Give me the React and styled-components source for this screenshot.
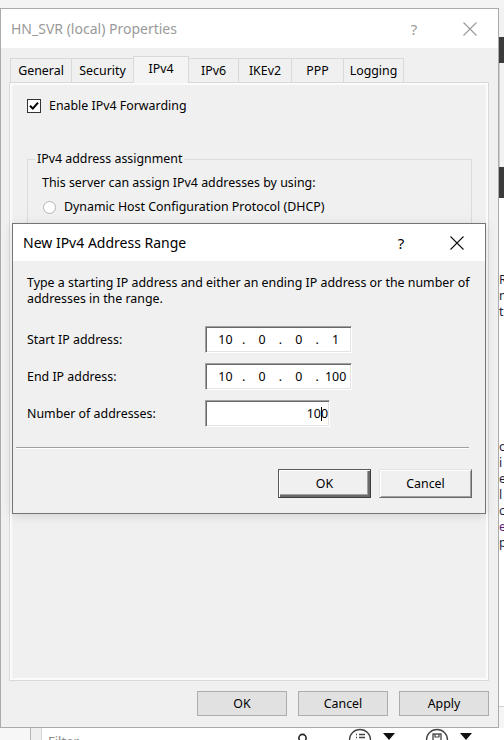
import React from 'react';
import styled, { createGlobalStyle } from 'styled-components';

const UI = `"Noto Sans", "Liberation Sans", Arial, sans-serif`;

const Global = createGlobalStyle`
  html, body { margin: 0; padding: 0; }
  body { width: 504px; height: 740px; overflow: hidden; background: #f5f5f5; font-family: ${UI}; }
  * { box-sizing: border-box; }
`;

const Desktop = styled.div`
  position: relative;
  width: 504px;
  height: 740px;
  overflow: hidden;
  font-family: ${UI};
  font-size: 12.4px;
  color: #000;
`;

/* ---------- background application (behind) ---------- */
const BackApp = styled.div`
  position: absolute;
  inset: 0;
  display: flex;
  flex-direction: column;
  background: #fff;
`;
const BackTop = styled.div`
  height: 8px;
  flex: none;
  background: #f4f4f4;
`;
const BackMiddle = styled.div`
  flex: 1;
  display: flex;
  min-height: 0;
`;
const BackFill = styled.div`
  flex: 1;
  background: #f0f0f0;
`;
const BackSide = styled.div`
  width: 5px;
  flex: none;
  display: flex;
  flex-direction: column;
  overflow: hidden;
  background: #fff;
`;
const SideBlock = styled.div`
  height: ${(p) => p.$h}px;
  flex: none;
  background: ${(p) => (p.$dark ? '#3b3b3b' : '#f2f2f2')};
  border-left: ${(p) => (p.$line ? '1px solid #cfcfcf' : 'none')};
`;
const SideText = styled.div`
  flex: 1;
  display: flex;
  flex-direction: column;
  padding-top: 74px;
  font-size: 12.4px;
  line-height: 16px;
  white-space: nowrap;
  border-bottom: 1px solid #cfcfcf;
`;
const SideLine = styled.div`
  color: ${(p) => p.$c || '#1e1e3c'};
  margin-top: ${(p) => p.$mt || 0}px;
`;
const SideFoot = styled.div`
  height: 21px;
  flex: none;
  background: #f5f5f5;
`;

const FilterBar = styled.div`
  height: 12px;
  flex: none;
  display: flex;
  align-items: flex-start;
  overflow: hidden;
  background: #fff;
`;
const Gutter = styled.div`
  width: ${(p) => p.$w}px;
  height: 100%;
  flex: none;
  background: ${(p) => p.$bg};
  border-right: 1px solid ${(p) => p.$line};
`;
const FilterBox = styled.div`
  width: 270px;
  height: 100%;
  flex: none;
  display: flex;
  align-items: flex-start;
  justify-content: space-between;
  padding: 5px 4px 0 6px;
  color: #8a8a8a;
  font-size: 13px;
  line-height: 16px;
`;
const ToolGroup = styled.div`
  display: flex;
  align-items: flex-start;
  gap: 10px;
  margin-left: ${(p) => p.$ml}px;
`;

/* ---------- properties window ---------- */
const Window = styled.div`
  position: absolute;
  left: 0;
  top: 8px;
  width: 499px;
  height: 720px;
  border: 1px solid #ababab;
  background: #f0f0f0;
  display: flex;
  flex-direction: column;
`;
const TitleBar = styled.div`
  height: ${(p) => p.$h}px;
  flex: none;
  background: #fff;
  display: flex;
  align-items: center;
  padding-left: 10px;
`;
const TitleText = styled.div`
  flex: 1;
  font-size: 14px;
  line-height: 18px;
  color: ${(p) => (p.$inactive ? '#9a9a9a' : '#000')};
  white-space: nowrap;
`;
const TitleButton = styled.div`
  width: 56px;
  height: 100%;
  flex: none;
  display: flex;
  align-items: center;
  justify-content: center;
  font-size: 15px;
  color: ${(p) => (p.$inactive ? '#9a9a9a' : '#000')};
`;
const WindowBody = styled.div`
  flex: 1;
  display: flex;
  flex-direction: column;
  padding: 8px 9px 11px 8px;
`;
const TabRow = styled.div`
  height: 26px;
  flex: none;
  display: flex;
  align-items: flex-end;
  padding-left: 1px;
`;
const Tab = styled.div`
  position: relative;
  z-index: ${(p) => (p.$active ? 2 : 0)};
  width: ${(p) => p.$w}px;
  height: ${(p) => (p.$active ? 27 : 24)}px;
  margin-right: -1px;
  margin-bottom: ${(p) => (p.$active ? -1 : 0)}px;
  border: 1px solid #d9d9d9;
  border-bottom: none;
  background: ${(p) => (p.$active ? '#f4f4f4' : '#f0f0f0')};
  display: flex;
  align-items: center;
  justify-content: center;
  padding-bottom: ${(p) => (p.$active ? 3 : 0)}px;
  line-height: 16px;
  white-space: nowrap;
`;
const Panel = styled.div`
  position: relative;
  z-index: 1;
  height: 599px;
  flex: none;
  border: 1px solid #d9d9d9;
  box-shadow: inset 0 0 0 2px #fbfbfb;
  background: #f0f0f0;
  padding: 15px 14px 0 17px;
  display: flex;
  flex-direction: column;
`;
const CheckRow = styled.label`
  display: flex;
  align-items: center;
  gap: 8px;
  height: 16px;
  line-height: 16px;
`;
const CheckBox = styled.span`
  width: 14px;
  height: 14px;
  flex: none;
  border: 1px solid #333;
  background: #fff;
  display: flex;
  align-items: center;
  justify-content: center;
`;
const Group = styled.fieldset`
  margin: 37px 0 0 0;
  padding: 0 7px;
  width: 445px;
  min-height: 150px;
  border: 1px solid #dcdcdc;
`;
const Legend = styled.legend`
  padding: 0 2px;
  line-height: 16px;
`;
const GroupContent = styled.div`
  padding: 8px 0 0 7px;
  display: flex;
  flex-direction: column;
  gap: 8px;
  line-height: 16px;
`;
const RadioRow = styled.div`
  display: flex;
  align-items: center;
  gap: 8px;
  height: 16px;
  padding-left: 1px;
`;
const Radio = styled.span`
  width: 13px;
  height: 13px;
  flex: none;
  border-radius: 50%;
  border: 1px solid #b4b4b4;
  background: #fff;
`;
const ButtonRow = styled.div`
  display: flex;
  justify-content: flex-end;
  gap: ${(p) => p.$gap}px;
  margin-top: ${(p) => p.$mt}px;
  flex: none;
`;
const FlatButton = styled.div`
  width: 90px;
  height: 25px;
  background: #e1e1e1;
  border: 1px solid #adadad;
  display: flex;
  align-items: center;
  justify-content: center;
`;

/* ---------- modal dialog ---------- */
const Dialog = styled.div`
  position: absolute;
  left: 12px;
  top: 223px;
  width: 474px;
  height: 291px;
  z-index: 5;
  border: 1px solid #747474;
  background: #f0f0f0;
  display: flex;
  flex-direction: column;
  box-shadow: 0 2px 10px rgba(0, 0, 0, 0.12);
`;
const DialogBody = styled.div`
  flex: 1;
  display: flex;
  flex-direction: column;
  padding: 14px 13px 15px 14px;
`;
const Desc = styled.div`
  line-height: 16px;
  white-space: nowrap;
`;
const Form = styled.div`
  display: grid;
  grid-template-columns: 178px auto;
  row-gap: 10px;
  margin-top: 19px;
  align-items: center;
  justify-items: start;
`;
const FieldLabel = styled.div`
  line-height: 16px;
`;
const Field = styled.div`
  width: ${(p) => p.$w}px;
  height: 27px;
  background: #fff;
  border-top: 1px solid #a0a0a0;
  border-left: 1px solid #a0a0a0;
  border-right: 1px solid #ffffff;
  border-bottom: 1px solid #ffffff;
  box-shadow: inset 1px 1px 0 #696969, inset -1px -1px 0 #e3e3e3;
  display: flex;
  align-items: center;
  justify-content: ${(p) => (p.$right ? 'flex-end' : 'flex-start')};
  padding: ${(p) => (p.$right ? '0 1px 0 0' : '0 0 0 4px')};
  line-height: 16px;
`;
const Octet = styled.span`
  width: 31px;
  text-align: center;
`;
const Dot = styled.span`
  width: 6px;
  text-align: center;
`;
const Caret = styled.span`
  display: inline-block;
  width: 1px;
  height: 14px;
  background: #000;
  vertical-align: middle;
  margin: 0 -1px 0 0;
`;
const Separator = styled.div`
  height: 2px;
  margin: 20px 3px 20px -11px;
  border-top: 1px solid #a0a0a0;
  border-bottom: 1px solid #ffffff;
  flex: none;
`;
const ClassicButton = styled.div`
  width: 93px;
  height: 29px;
  background: #f0f0f0;
  display: flex;
  align-items: center;
  justify-content: center;
  border-top: 1px solid ${(p) => (p.$default ? '#5a5a5a' : '#e3e3e3')};
  border-left: 1px solid ${(p) => (p.$default ? '#5a5a5a' : '#e3e3e3')};
  border-right: 1px solid ${(p) => (p.$default ? '#3c3c3c' : '#696969')};
  border-bottom: 1px solid ${(p) => (p.$default ? '#3c3c3c' : '#696969')};
  box-shadow: ${(p) =>
    p.$default
      ? 'inset 1px 1px 0 #fff, inset -2px -2px 0 #696969, inset -3px -3px 0 #a0a0a0'
      : 'inset 1px 1px 0 #fff, inset -1px -1px 0 #a0a0a0'};
  padding-bottom: 1px;
`;

const Close = ({ color }) => (
  <svg width="14" height="14" viewBox="0 0 14 14">
    <path d="M0.5 0.5 L13.5 13.5 M13.5 0.5 L0.5 13.5" stroke={color} strokeWidth="1.1" fill="none" />
  </svg>
);

const Check = () => (
  <svg width="10" height="10" viewBox="0 0 10 10">
    <path d="M1 4.8 L3.8 7.6 L9 1.6" stroke="#000" strokeWidth="2" fill="none" />
  </svg>
);

const Magnifier = () => (
  <svg width="12" height="12" viewBox="0 0 12 12">
    <circle cx="6.5" cy="5" r="3.6" stroke="#222" strokeWidth="1.6" fill="none" />
    <path d="M4 8 L1 11" stroke="#222" strokeWidth="1.8" />
  </svg>
);

const ListCircle = () => (
  <svg width="24" height="14" viewBox="0 0 24 14">
    <circle cx="12" cy="12" r="10.5" stroke="#444" strokeWidth="1.3" fill="#fff" />
    <path d="M8 6.5 h1 M11 6.5 h6 M8 9.5 h1 M11 9.5 h6" stroke="#444" strokeWidth="1.3" />
  </svg>
);

const SaveCircle = () => (
  <svg width="24" height="14" viewBox="0 0 24 14">
    <circle cx="12" cy="12" r="10.5" stroke="#444" strokeWidth="1.3" fill="#fff" />
    <rect x="8" y="6" width="8" height="8" stroke="#444" strokeWidth="1.3" fill="none" />
    <path d="M10 6 v3 h4 v-3" stroke="#444" strokeWidth="1.2" fill="none" />
  </svg>
);

const Caretdown = () => (
  <svg width="14" height="12" viewBox="0 0 14 12">
    <path d="M1 5 H13 L7 12 Z" fill="#111" />
  </svg>
);

const tabs = [
  ['General', 62],
  ['Security', 63],
  ['IPv4', 56, true],
  ['IPv6', 51],
  ['IKEv2', 54],
  ['PPP', 53],
  ['Logging', 61],
];

const IPField = ({ parts }) => (
  <Field $w={147}>
    <Octet>{parts[0]}</Octet>
    <Dot>.</Dot>
    <Octet>{parts[1]}</Octet>
    <Dot>.</Dot>
    <Octet>{parts[2]}</Octet>
    <Dot>.</Dot>
    <Octet>{parts[3]}</Octet>
  </Field>
);

export default function App() {
  return (
    <Desktop>
      <Global />
      <BackApp>
        <BackTop />
        <BackMiddle>
          <BackFill />
          <BackSide>
            <SideBlock $h={29} />
            <SideBlock $h={26} $dark />
            <SideBlock $h={104} $line />
            <SideBlock $h={31} $dark />
            <SideText>
              <SideLine>R</SideLine>
              <SideLine>n</SideLine>
              <SideLine>t</SideLine>
              <SideLine $mt={119}>o</SideLine>
              <SideLine>i</SideLine>
              <SideLine>e</SideLine>
              <SideLine>l</SideLine>
              <SideLine>c</SideLine>
              <SideLine $c="#5a1e78">e</SideLine>
              <SideLine>p</SideLine>
            </SideText>
            <SideFoot />
          </BackSide>
        </BackMiddle>
        <FilterBar>
          <Gutter $w={31} $bg="#f7f7f7" $line="#b4b4b4" />
          <Gutter $w={11} $bg="#efefef" $line="#d6d6d6" />
          <FilterBox>
            <span>Filter</span>
            <Magnifier />
          </FilterBox>
          <ToolGroup $ml={36}>
            <ListCircle />
            <Caretdown />
          </ToolGroup>
          <ToolGroup $ml={29}>
            <SaveCircle />
            <Caretdown />
          </ToolGroup>
        </FilterBar>
      </BackApp>

      <Window>
        <TitleBar $h={39}>
          <TitleText $inactive>HN_SVR (local) Properties</TitleText>
          <TitleButton $inactive>?</TitleButton>
          <TitleButton $inactive>
            <Close color="#9a9a9a" />
          </TitleButton>
        </TitleBar>
        <WindowBody>
          <TabRow>
            {tabs.map(([label, w, active]) => (
              <Tab key={label} $w={w} $active={active}>
                {label}
              </Tab>
            ))}
          </TabRow>
          <Panel>
            <CheckRow>
              <CheckBox>
                <Check />
              </CheckBox>
              Enable IPv4 Forwarding
            </CheckRow>
            <Group>
              <Legend>IPv4 address assignment</Legend>
              <GroupContent>
                <div>This server can assign IPv4 addresses by using:</div>
                <RadioRow>
                  <Radio />
                  Dynamic Host Configuration Protocol (DHCP)
                </RadioRow>
              </GroupContent>
            </Group>
          </Panel>
          <ButtonRow $gap={11} $mt={10}>
            <FlatButton>OK</FlatButton>
            <FlatButton>Cancel</FlatButton>
            <FlatButton>Apply</FlatButton>
          </ButtonRow>
        </WindowBody>
      </Window>

      <Dialog>
        <TitleBar $h={37}>
          <TitleText>New IPv4 Address Range</TitleText>
          <TitleButton>?</TitleButton>
          <TitleButton>
            <Close color="#111" />
          </TitleButton>
        </TitleBar>
        <DialogBody>
          <Desc>
            Type a starting IP address and either an ending IP address or the number of
            <br />
            addresses in the range.
          </Desc>
          <Form>
            <FieldLabel>Start IP address:</FieldLabel>
            <IPField parts={['10', '0', '0', '1']} />
            <FieldLabel>End IP address:</FieldLabel>
            <IPField parts={['10', '0', '0', '100']} />
            <FieldLabel>Number of addresses:</FieldLabel>
            <Field $w={125} $right>
              <span>
                10
                <Caret />0
              </span>
            </Field>
          </Form>
          <Separator />
          <ButtonRow $gap={8} $mt={0}>
            <ClassicButton $default>OK</ClassicButton>
            <ClassicButton>Cancel</ClassicButton>
          </ButtonRow>
        </DialogBody>
      </Dialog>
    </Desktop>
  );
}
